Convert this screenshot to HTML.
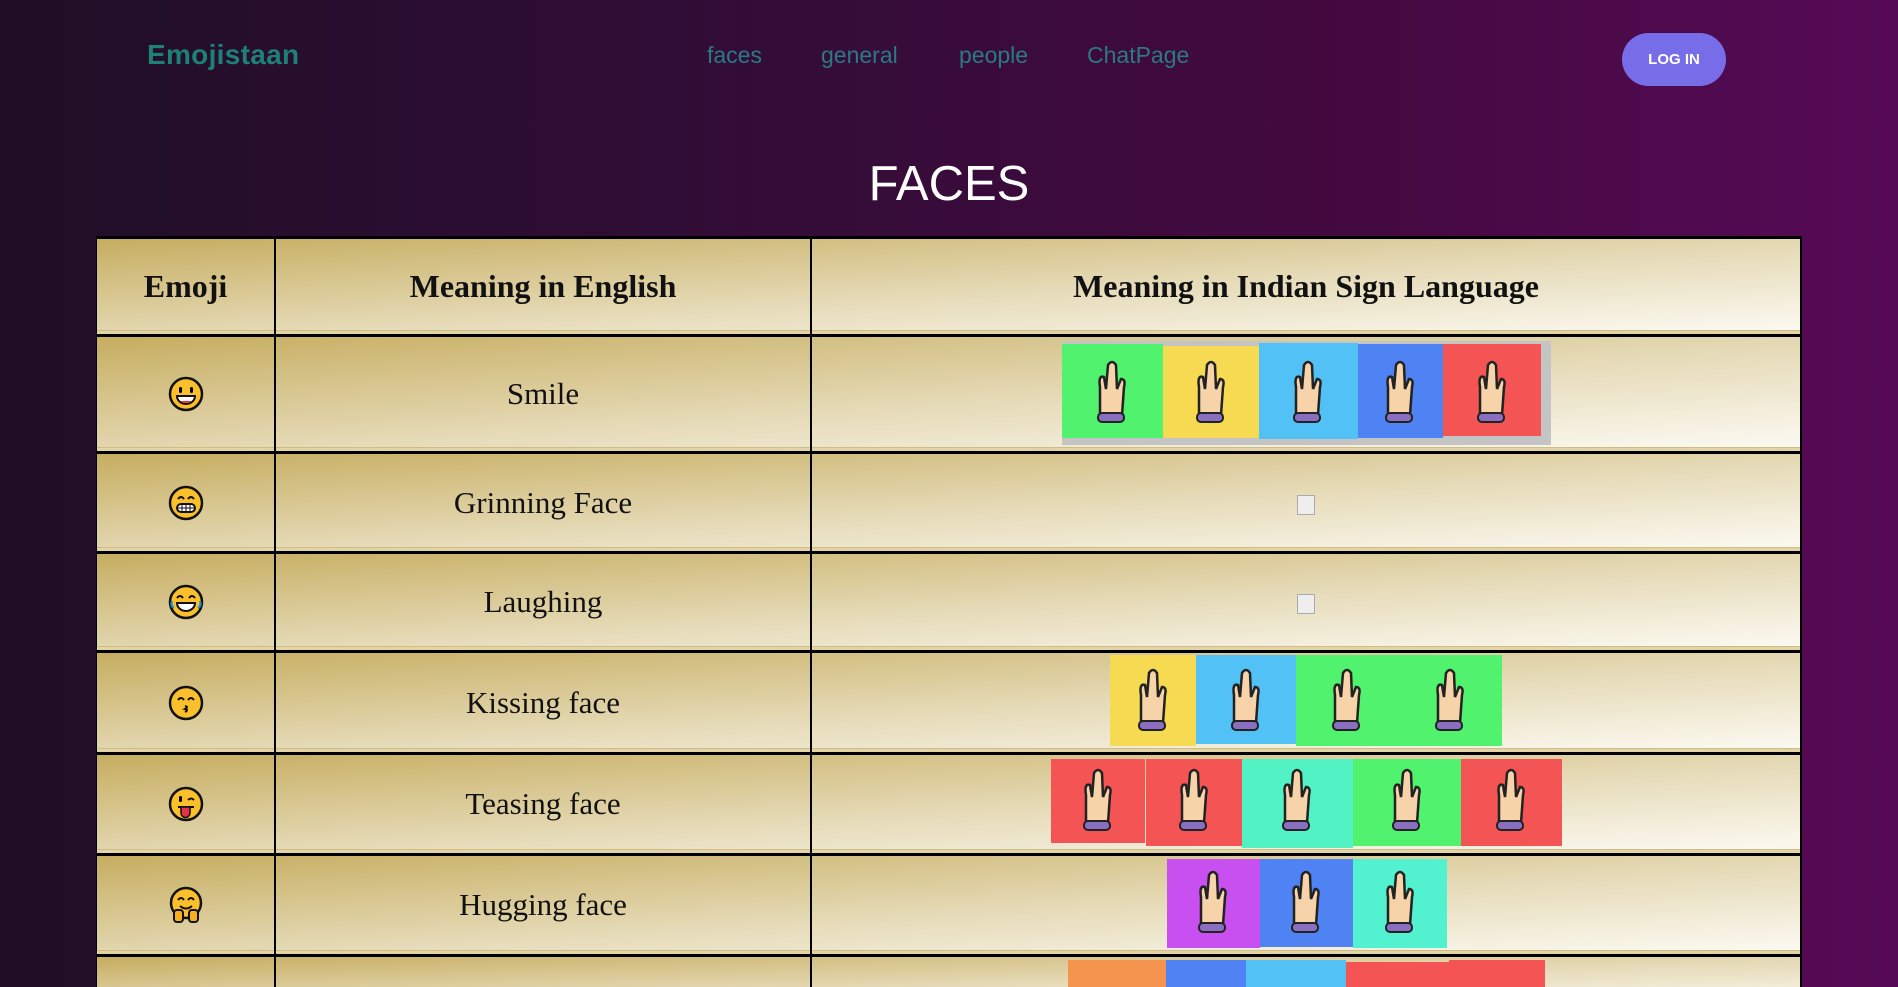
<!DOCTYPE html>
<html style="width:1898px;height:987px;overflow:hidden"><head><meta charset="utf-8"><style>
*{margin:0;padding:0;box-sizing:border-box}
body{width:1898px;height:987px;overflow:hidden;background:linear-gradient(90deg,#1f0e25 0%,#300d36 35%,#43093f 70%,#560a56 100%);font-family:"Liberation Sans",sans-serif;position:relative}
.a{position:absolute}
.logo{left:147px;top:39px;font-size:28px;font-weight:bold;color:#1d8079;letter-spacing:0.3px}
.nav{top:42px;font-size:23px;color:#2a7a82}
.btn{left:1622px;top:33px;width:104px;height:53px;border-radius:27px;background:#786de8;color:#fff;font-weight:bold;font-size:15px;text-align:center;line-height:53px}
.title{left:0;width:1898px;top:156px;text-align:center;color:#fff;font-size:49px}
.tbl{left:96px;top:236px;width:1706px;height:751px;background:#000;overflow:hidden}
.row{position:absolute;left:0;width:1706px}
.bg{position:absolute;left:1px;right:2px;top:3px;bottom:0;background:linear-gradient(to bottom right,#c6ad60 0%,#e6dbb8 55%,#fcfaf3 100%)}
.bg:after{content:"";position:absolute;left:0;right:0;bottom:0;height:3px;background:#e2d4a6;border-top:1px solid #cfbd86}
.vl{position:absolute;top:3px;bottom:0;width:2px;background:#000}
.cell{position:absolute;top:3px;bottom:0;font-family:"Liberation Serif",serif;color:#111;display:flex;align-items:center;justify-content:center;font-size:31px}
.c1{left:1px;width:177px}.c2{left:180px;width:534px}.c3{left:716px;width:988px}
.h{font-weight:bold;font-size:32px}
.broken{position:absolute;width:18px;height:20px;border:1px solid #aaa;background:#eee}
</style></head><body>
<div class="a logo">Emojistaan</div>
<div class="a nav" style="left:707px">faces</div>
<div class="a nav" style="left:821px">general</div>
<div class="a nav" style="left:959px">people</div>
<div class="a nav" style="left:1087px">ChatPage</div>
<div class="a btn">LOG IN</div>
<div class="a title">FACES</div>

<div class="a tbl">
 <div class="row" style="top:0;height:98px"><div class="bg"></div><div class="vl" style="left:178px"></div><div class="vl" style="left:714px"></div><div class="cell c1 h">Emoji</div><div class="cell c2 h">Meaning in English</div><div class="cell c3 h">Meaning in Indian Sign Language</div></div>
 <div class="row" style="top:98px;height:117px"><div class="bg"></div><div class="vl" style="left:178px"></div><div class="vl" style="left:714px"></div><div class="cell c1"><svg width="36" height="36" viewBox="0 0 36 36"><circle cx="18" cy="18" r="16" fill="#f9c02c" stroke="#111" stroke-width="2.5"/><rect x="11" y="11" width="3" height="6" rx="1.5"/><rect x="22" y="11" width="3" height="6" rx="1.5"/><path d="M9 20h18a9 8 0 0 1-18 0z" fill="#fff" stroke="#111" stroke-width="2"/><path d="M13 25h10l-2 2h-6z" fill="#e33"/></svg></div><div class="cell c2">Smile</div></div>
 <div class="row" style="top:215px;height:100px"><div class="bg"></div><div class="vl" style="left:178px"></div><div class="vl" style="left:714px"></div><div class="cell c1"><svg width="36" height="36" viewBox="0 0 36 36"><circle cx="18" cy="18" r="16" fill="#f9c02c" stroke="#111" stroke-width="2.5"/><path d="M10 14q3-4 6 0M20 14q3-4 6 0" fill="none" stroke="#111" stroke-width="2"/><rect x="9" y="19" width="18" height="8" rx="4" fill="#fff" stroke="#111" stroke-width="2"/><path d="M9 23h18M14 19v8M18 19v8M22 19v8" stroke="#111"/></svg></div><div class="cell c2">Grinning Face</div></div>
 <div class="row" style="top:315px;height:99px"><div class="bg"></div><div class="vl" style="left:178px"></div><div class="vl" style="left:714px"></div><div class="cell c1"><svg width="36" height="36" viewBox="0 0 36 36"><circle cx="18" cy="18" r="16" fill="#f9c02c" stroke="#111" stroke-width="2.5"/><path d="M9 14q3-4 6 0M21 14q3-4 6 0" fill="none" stroke="#111" stroke-width="2"/><path d="M9 19h18a9 8 0 0 1-18 0z" fill="#fff" stroke="#111" stroke-width="2"/><path d="M4 17q-2 5 2 7M32 17q2 5-2 7" fill="#4af" stroke="#28c" stroke-width="2"/></svg></div><div class="cell c2">Laughing</div></div>
 <div class="row" style="top:414px;height:102px"><div class="bg"></div><div class="vl" style="left:178px"></div><div class="vl" style="left:714px"></div><div class="cell c1"><svg width="36" height="36" viewBox="0 0 36 36"><circle cx="18" cy="18" r="16" fill="#f9c02c" stroke="#111" stroke-width="2.5"/><path d="M10 15q3-4 6 0M20 15q3-4 6 0" fill="none" stroke="#111" stroke-width="2"/><path d="M17 21q4 1 0 3q4 1 0 3" fill="none" stroke="#111" stroke-width="2"/></svg></div><div class="cell c2">Kissing face</div></div>
 <div class="row" style="top:516px;height:101px"><div class="bg"></div><div class="vl" style="left:178px"></div><div class="vl" style="left:714px"></div><div class="cell c1"><svg width="36" height="36" viewBox="0 0 36 36"><circle cx="18" cy="18" r="16" fill="#f9c02c" stroke="#111" stroke-width="2.5"/><rect x="11" y="10" width="3" height="6" rx="1.5"/><path d="M20 14q3-3 6 0" fill="none" stroke="#111" stroke-width="2"/><path d="M10 21h16" stroke="#111" stroke-width="2"/><path d="M13 21h9v6a4.5 4.5 0 0 1-9 0z" fill="#e3324a" stroke="#111" stroke-width="1.5"/></svg></div><div class="cell c2">Teasing face</div></div>
 <div class="row" style="top:617px;height:101px"><div class="bg"></div><div class="vl" style="left:178px"></div><div class="vl" style="left:714px"></div><div class="cell c1"><svg width="36" height="38" viewBox="0 0 36 38"><circle cx="18" cy="17" r="15" fill="#f9c02c" stroke="#111" stroke-width="2.5"/><path d="M10 14q3-4 6 0M20 14q3-4 6 0" fill="none" stroke="#111" stroke-width="2"/><path d="M12 20q6 5 12 0" fill="none" stroke="#111" stroke-width="2"/><rect x="6" y="24" width="9" height="12" rx="3" fill="#f5b020" stroke="#111" stroke-width="2"/><rect x="21" y="24" width="9" height="12" rx="3" fill="#f5b020" stroke="#111" stroke-width="2"/></svg></div><div class="cell c2">Hugging face</div></div>
 <div class="row" style="top:718px;height:33px"><div class="bg" style="bottom:-20px"></div><div class="vl" style="left:178px"></div><div class="vl" style="left:714px"></div></div>
</div>

<div class="a" style="left:1062px;top:341px;width:489px;height:104px;background:#c4c4c4"></div>
<div class="broken" style="left:1297px;top:495px"></div>
<div class="broken" style="left:1297px;top:594px"></div>

<svg class="a" style="left:0;top:0" width="1898" height="987">
<defs>
<g id="hand"><path d="M-12 20 L-12 -8 Q-14 -20 -8 -18 L-6 -6 L-4 -30 Q0 -36 4 -30 L5 -6 L9 -16 Q14 -16 12 -8 L10 20 Z" fill="#f6d3a8" stroke="#222" stroke-width="2.5"/><rect x="-14" y="18" width="26" height="9" rx="4" fill="#8a6fc0" stroke="#222" stroke-width="2"/></g>
</defs>
<g>
<rect x="1062" y="344" width="101" height="94" fill="#50f26e"/><use href="#hand" x="1112" y="395"/>
<rect x="1163" y="346" width="96" height="92" fill="#f6da52"/><use href="#hand" x="1211" y="395"/>
<rect x="1259" y="343" width="99" height="96" fill="#52c2f6"/><use href="#hand" x="1308" y="395"/>
<rect x="1358" y="344" width="85" height="94" fill="#4f82f2"/><use href="#hand" x="1400" y="395"/>
<rect x="1443" y="344" width="98" height="92" fill="#f45454"/><use href="#hand" x="1492" y="395"/>

<rect x="1110" y="655" width="86" height="91" fill="#f6da52"/><use href="#hand" x="1153" y="703"/>
<rect x="1196" y="655" width="100" height="89" fill="#52c2f6"/><use href="#hand" x="1246" y="703"/>
<rect x="1296" y="655" width="103" height="91" fill="#50f26e"/><use href="#hand" x="1347" y="703"/>
<rect x="1399" y="655" width="103" height="91" fill="#50f26e"/><use href="#hand" x="1450" y="703"/>

<rect x="1051" y="759" width="94" height="84" fill="#f45454"/><use href="#hand" x="1098" y="803"/>
<rect x="1146" y="759" width="96" height="87" fill="#f45454"/><use href="#hand" x="1194" y="803"/>
<rect x="1242" y="759" width="111" height="89" fill="#52f2c4"/><use href="#hand" x="1297" y="803"/>
<rect x="1353" y="759" width="108" height="87" fill="#50f26e"/><use href="#hand" x="1407" y="803"/>
<rect x="1461" y="759" width="101" height="87" fill="#f45454"/><use href="#hand" x="1511" y="803"/>

<rect x="1167" y="859" width="93" height="89" fill="#c850f0"/><use href="#hand" x="1213" y="905"/>
<rect x="1260" y="859" width="93" height="88" fill="#4f82f2"/><use href="#hand" x="1306" y="905"/>
<rect x="1353" y="859" width="94" height="89" fill="#52f2d0"/><use href="#hand" x="1400" y="905"/>

<rect x="1068" y="960" width="98" height="27" fill="#f4944e"/>
<rect x="1166" y="960" width="80" height="27" fill="#4f82f2"/>
<rect x="1246" y="960" width="100" height="27" fill="#52c2f6"/>
<rect x="1346" y="962" width="103" height="25" fill="#f45454"/>
<rect x="1449" y="960" width="96" height="27" fill="#f45454"/>
</g>
</svg>
</body></html>
